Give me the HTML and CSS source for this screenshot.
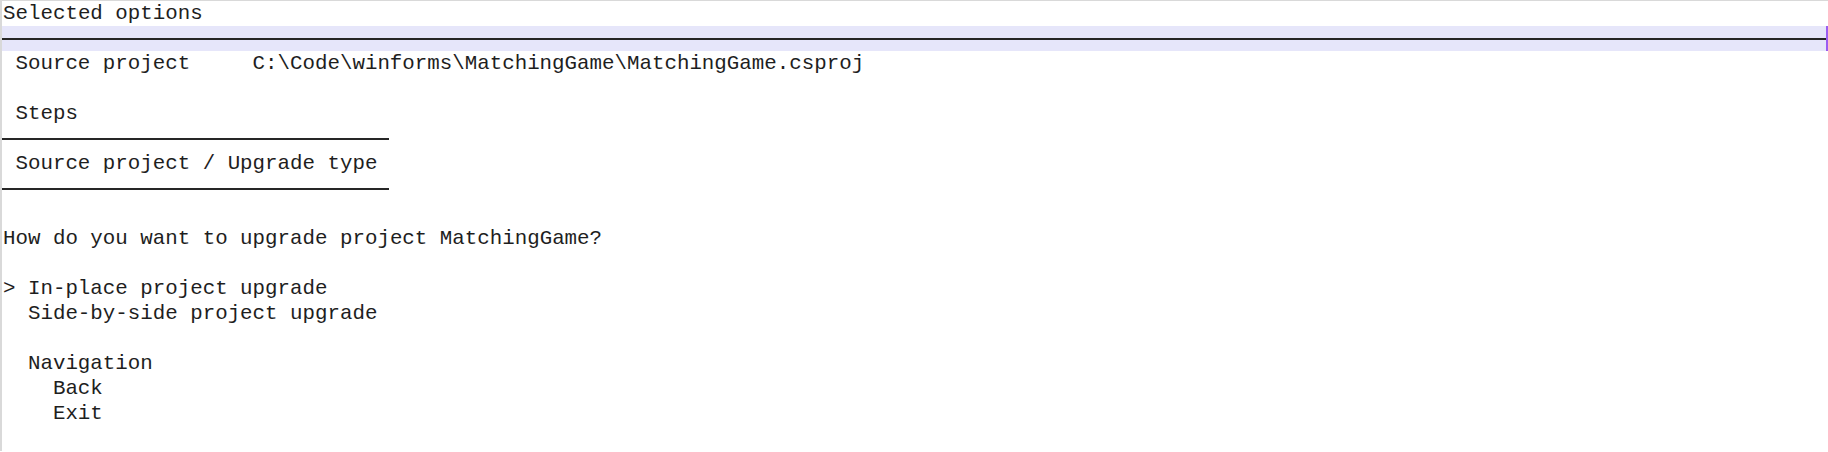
FILE: index.html
```html
<!DOCTYPE html>
<html lang="en">
<head>
  <meta charset="UTF-8" />
  <title>Upgrade Assistant</title>
  <link rel="stylesheet" href="styles.css">
</head>
<body>
  <div class="console">
    <div class="row">Selected options</div>
    <div class="row band"><div class="rule"></div></div>
    <div class="row kv"><span class="key">Source project</span><span class="value">C:\Code\winforms\MatchingGame\MatchingGame.csproj</span></div>
    <div class="row"></div>
    <div class="row indent">Steps</div>

    <div class="steps">
      <div class="row"><div class="rule"></div></div>
      <div class="row indent">Source project / Upgrade type</div>
      <div class="row"><div class="rule"></div></div>
    </div>

    <div class="row"></div>
    <div class="row">How do you want to upgrade project MatchingGame?</div>
    <div class="row"></div>

    <div class="row choice selected"><span class="marker">&gt;</span>In-place project upgrade</div>
    <div class="row choice"><span class="marker"></span>Side-by-side project upgrade</div>
    <div class="row"></div>
    <div class="row choice"><span class="marker"></span>Navigation</div>
    <div class="row choice sub"><span class="marker"></span>Back</div>
    <div class="row choice sub"><span class="marker"></span>Exit</div>
    <div class="row"></div>
  </div>
</body>
</html>
```

FILE: styles.css
```css
html, body {
  margin: 0;
  padding: 0;
  background: #fff;
}
body {
  font-family: "Liberation Mono", "Courier New", monospace;
  font-size: 20.8px;
  line-height: 25px;
  color: #1e1e1e;
  height: 452px;
  overflow: hidden;
}
.console {
  border-top: 1px solid #d9d9d9;
  border-left: 2px solid #d9d9d9;
  height: 451px;
  box-sizing: border-box;
}
.row {
  height: 25px;
  padding-left: 1px;
  white-space: pre;
  position: relative;
}
.indent {
  padding-left: calc(1ch + 1px);
}
.band {
  background: #e6e6fa;
  display: flex;
  align-items: center;
  padding-left: 0;
  border-right: 2px solid #9b5cf0;
}
.rule {
  height: 2px;
  background: #262626;
  flex: 1;
  width: 100%;
}
.row > .rule {
  position: absolute;
  left: 0;
  top: 12px;
}
.band > .rule {
  position: static;
}
.kv {
  display: flex;
  padding-left: calc(1ch + 1px);
}
.kv .key {
  width: 19ch;
}
.steps {
  width: 31ch;
}
.choice .marker {
  display: inline-block;
  width: 2ch;
}
.choice.sub {
  padding-left: calc(2ch + 1px);
}
```
